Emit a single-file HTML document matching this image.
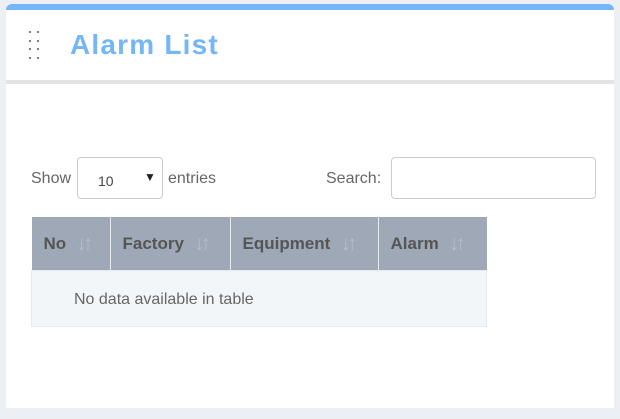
<!DOCTYPE html>
<html><head><style>
body{margin:0;width:620px;height:419px;background:#eceff3;font-family:"Liberation Sans",sans-serif;position:relative;overflow:hidden}
.card{position:absolute;left:6px;top:4px;width:608px;height:404px;background:#fff;border-radius:6px 6px 0 0;overflow:hidden}
.bar{position:absolute;left:0;top:0;width:100%;height:6px;background:#74b6f7}
.sep{position:absolute;left:0;top:76px;width:100%;height:4px;background:#e2e3e4}
.dot{position:absolute;width:2px;height:2px;background:#555;border-radius:1px}
.title{position:absolute;left:64px;top:25px;font-size:28px;font-weight:bold;color:#74b6f7;letter-spacing:1.2px}
.t{position:absolute;font-size:16px;color:#666}
.box{position:absolute;border:1px solid #ccc;border-radius:4px;background:#fff}
table{position:absolute;left:25px;top:213px;border-collapse:collapse;width:456px}
th{background:#9ea8b7;color:#555;font-size:17px;text-align:left;height:53px;padding:0 0 0 12px;border-left:1px solid #e6e9ee;font-weight:bold}
th span{color:#b4bcc8;font-weight:bold;margin-left:10px;font-size:21px;letter-spacing:-4px;vertical-align:-1px}
td{background:#f3f6f9;height:52px;padding:0;font-size:16px;color:#666;text-align:center;border:1px solid #e6e9ee}
</style></head><body>
<div class="card">
<div class="bar"></div>
<div class="dot" style="left:23px;top:27px"></div><div class="dot" style="left:31px;top:27px"></div>
<div class="dot" style="left:23px;top:36px"></div><div class="dot" style="left:31px;top:36px"></div>
<div class="dot" style="left:23px;top:44px"></div><div class="dot" style="left:31px;top:44px"></div>
<div class="dot" style="left:23px;top:53px"></div><div class="dot" style="left:31px;top:53px"></div>
<div class="title">Alarm List</div>
<div class="sep"></div>
<div class="t" style="left:25px;top:166px">Show</div>
<div class="box" style="left:71px;top:153px;width:84px;height:40px"><span style="position:absolute;left:20px;top:15px;font-size:14px;color:#444">10</span><span style="position:absolute;left:66px;top:12px;font-size:12px;color:#222">▼</span></div>
<div class="t" style="left:162px;top:166px">entries</div>
<div class="t" style="left:320px;top:166px">Search:</div>
<div class="box" style="left:385px;top:153px;width:203px;height:40px"></div>
<table><tr><th style="width:66px;border-left:none">No<span>↓↑</span></th><th style="width:107px">Factory<span>↓↑</span></th><th style="width:135px">Equipment<span>↓↑</span></th><th>Alarm<span>↓↑</span></th></tr>
<tr><td colspan="4" style="text-align:left;padding-left:42px;padding-top:3px">No data available in table</td></tr></table>
</div>
</body></html>
